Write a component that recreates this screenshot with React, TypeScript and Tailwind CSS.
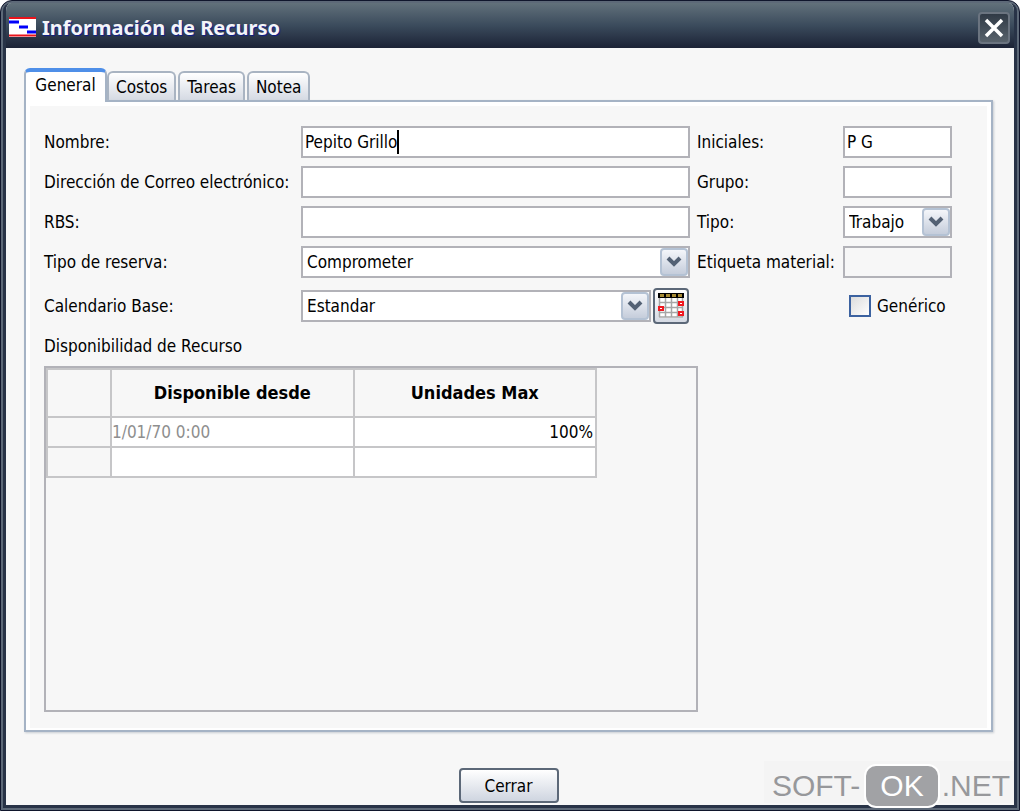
import {ReactNode, useState} from "react";

const inputClass = 'block h-8 w-full min-w-0 border-2 border-[#b2b2b8] bg-white px-0.5 text-black outline-none disabled:bg-[#f7f7f7]';

const tabs = ['General', 'Costos', 'Tareas', 'Notea'];

const rows = [
    { from: '1/01/70 0:00', units: '100%' },
    { from: '', units: '' },
];

const AppIcon = () => (
    <svg width="27" height="20" viewBox="0 0 27 20" className="-mt-0.5" aria-hidden="true">
        <rect width="27" height="20" fill="#fff" />
        <path d="M0 1h27M0 18.5h27" stroke="#e8141c" strokeWidth="2" />
        <path d="M0 5h10M10 10h9M18 15h9" stroke="#0000fa" strokeWidth="3" />
    </svg>
);

const CalendarIcon = () => (
    <svg width="28" height="26" viewBox="0 0 28 26" className="shrink-0" aria-hidden="true">
        <rect x="2" y="5" width="24" height="20" fill="#fff" />
        <path d="M2.5 5v19M8.500 5v19M14.500 5v19M20.500 5v19M25.500 5v19M2 9.500h24M2 14.500h24M2 19.500h24M2 24h24" stroke="#a6a6a6" strokeWidth="1.5" />
        <rect x="1" y="0" width="26" height="5" fill="#000" />
        <path d="M3 2.500h4M9 2.500h4M15 2.500h4M21 2.500h4" stroke="#a58a35" strokeWidth="3" />
        <path d="M22 9h4v3h-4zM2 14h4v3H2zM22 19h4v3h-4z" fill="#fff" stroke="#f01820" strokeWidth="2" />
    </svg>
);

const Dropdown = ({ id, options }: { id: string, options: string[] }) => (
    <div className="relative min-w-0 flex-1">
        <select id={id} className="block h-8 w-full appearance-none border-2 border-[#b2b2b8] bg-white pl-1 pr-8 text-black outline-none">
            {options.map((option) => <option key={option}>{option}</option>)}
        </select>
        <span className="pointer-events-none absolute inset-y-0.5 right-0.5 flex w-7 items-center justify-center rounded-sm border-2 border-[#b4c2d4] bg-gradient-to-b from-[#f4f6fa] to-[#c5cddb]">
            <svg width="16" height="12" viewBox="0 0 16 12" aria-hidden="true">
                <path d="M2 2l6 6 6-6" fill="none" stroke="#536174" strokeWidth="4" />
            </svg>
        </span>
    </div>
);

const Label = ({ htmlFor, children }: { htmlFor: string, children: ReactNode }) => (
    <label htmlFor={htmlFor} className="whitespace-nowrap">{children}</label>
);

const TitleBar = () => (
    <header className="flex h-[45px] shrink-0 items-center gap-1.5 bg-gradient-to-b from-[#62717b] via-[#3b4b5c] to-[#1c2336] pl-[3px] pr-1 pt-1">
        <AppIcon />
        <h1 className="flex-1 font-['Noto_Sans',sans-serif] text-[20px] font-bold text-[#f4f5f8] [text-shadow:1px_1px_1px_#0c1a8c]">
            Información de Recurso
        </h1>
        <button aria-label="Cerrar ventana" className="flex h-8 w-8 items-center justify-center rounded-sm border-2 border-[#6b7480] bg-gradient-to-b from-[#303a46] to-[#59636c]">
            <svg width="20" height="20" viewBox="0 0 20 20" className="shrink-0" aria-hidden="true">
                <path d="M2 2l16 16M18 2L2 18" stroke="#fff" strokeWidth="3.5" />
            </svg>
        </button>
    </header>
);

const Availability = () => (
    <section className="mr-[254px] flex flex-1 flex-col">
        <h2 className="mt-2 leading-6">Disponibilidad de Recurso</h2>
        <div className="mt-2 flex-1 border-2 border-[#b2b2b8]">
            <table className="w-[551px] table-fixed border-collapse">
                <colgroup>
                    <col className="w-16" />
                    <col />
                    <col />
                </colgroup>
                <thead>
                    <tr className="h-12 text-[18px]">
                        <th className="border-2 border-[#c6c6c8]"></th>
                        <th className="border-2 border-[#c6c6c8] font-bold">Disponible desde</th>
                        <th className="border-2 border-[#c6c6c8] font-bold">Unidades Max</th>
                    </tr>
                </thead>
                <tbody>
                    {rows.map((row, i) => (
                        <tr key={i} className="h-[30px]">
                            <td className="border-2 border-[#c6c6c8]"></td>
                            <td className="border-2 border-[#c6c6c8] bg-white text-[#8e8e8e]">{row.from}</td>
                            <td className="border-2 border-[#c6c6c8] bg-white px-0.5 text-right">{row.units}</td>
                        </tr>
                    ))}
                </tbody>
            </table>
        </div>
    </section>
);

const Watermark = () => (
    <div className="pointer-events-none absolute bottom-2 right-1.5 flex h-[42px] items-center bg-[#f2f2f2]/80 pl-2 pr-1 pt-2 font-['Liberation_Sans',sans-serif] text-[30px] text-[#97989b]">
        <span>SOFT-</span>
        <span className="ml-1 mr-0.5 rounded-xl border-2 border-white bg-[#a1a2a5] px-3.5 leading-10 text-white">OK</span>
        <span>.NET</span>
    </div>
);

export default function App() {
    const [active, setActive] = useState('General');
    const [name, setName] = useState('Pepito Grillo');

    return (
        <div className="relative min-h-screen bg-white font-['DejaVu_Sans_Condensed','Open_Sans',sans-serif] text-[17px] leading-6 text-black">
            <div className="flex min-h-screen flex-col rounded-t-xl border border-[#10162c] bg-[#5d6978] p-0.5">
                <div className="flex flex-1 flex-col overflow-hidden rounded-t-lg border-x-[3px] border-b-[3px] border-[#283347] bg-[#f7f7f7]">
                    <TitleBar />
                    <main className="flex flex-1 flex-col pb-0.5 pl-[18px] pr-[21px] pt-5">
                        <div role="tablist" className="flex items-end">
                            {tabs.map((tab) => (
                                <button
                                    key={tab}
                                    role="tab"
                                    aria-selected={tab === active}
                                    onClick={() => setActive(tab)}
                                    className={tab === active
                                        ? 'z-10 -mb-0.5 h-[34px] w-[83px] rounded-t-md border-x-2 border-t-4 border-x-[#a5b3c5] border-t-[#4f8fe8] bg-white pb-1'
                                        : 'mr-0.5 h-[29px] rounded-t-md border-x-2 border-t-2 border-[#a9b4c2] bg-gradient-to-b from-white to-[#d5dae3] px-[7px]'}
                                >
                                    {tab}
                                </button>
                            ))}
                        </div>
                        <div role="tabpanel" className="flex flex-1 flex-col border-2 border-[#a5b3c5] shadow-[1px_1px_2px_#c8ccd2]">
                            <div className="flex flex-1 flex-col border-4 border-b-2 border-white pb-4 pl-3.5 pr-[35px] pt-5">
                                <div className="grid grid-cols-[257px_1fr_146px_109px] items-center gap-y-2">
                                    <Label htmlFor="nombre">Nombre:</Label>
                                    <div className="relative mr-[7px]">
                                        <input id="nombre" className={inputClass} value={name} onChange={(e) => setName(e.target.value)} />
                                        <span aria-hidden="true" className="pointer-events-none absolute left-1 top-1 h-6 border-r-2 border-black">
                                            <span className="invisible whitespace-pre">{name}</span>
                                        </span>
                                    </div>
                                    <Label htmlFor="iniciales">Iniciales:</Label>
                                    <input id="iniciales" className={inputClass} defaultValue="P G" />

                                    <Label htmlFor="correo">Dirección de Correo electrónico:</Label>
                                    <div className="mr-[7px]"><input id="correo" className={inputClass} /></div>
                                    <Label htmlFor="grupo">Grupo:</Label>
                                    <input id="grupo" className={inputClass} />

                                    <Label htmlFor="rbs">RBS:</Label>
                                    <div className="mr-[7px]"><input id="rbs" className={inputClass} /></div>
                                    <Label htmlFor="tipo">Tipo:</Label>
                                    <Dropdown id="tipo" options={['Trabajo', 'Material']} />

                                    <Label htmlFor="reserva">Tipo de reserva:</Label>
                                    <div className="mr-[7px] flex"><Dropdown id="reserva" options={['Comprometer', 'Proponer']} /></div>
                                    <Label htmlFor="etiqueta">Etiqueta material:</Label>
                                    <input id="etiqueta" className={inputClass} disabled />

                                    <Label htmlFor="calendario">Calendario Base:</Label>
                                    <div className="mr-2 flex items-center gap-0.5 py-0.5">
                                        <Dropdown id="calendario" options={['Estandar', 'Turno de noche']} />
                                        <button aria-label="Calendario" className="flex h-9 w-9 items-center justify-center rounded-sm border-2 border-[#5c6878] bg-gradient-to-b from-white to-[#d5dae3]">
                                            <CalendarIcon />
                                        </button>
                                    </div>
                                    <label className="col-start-4 flex items-center gap-1.5 pl-1.5">
                                        <input type="checkbox" className="h-[22px] w-[22px] shrink-0 appearance-none border-2 border-[#3c62a0] bg-gradient-to-br from-[#dcdcdc] to-white checked:bg-[#3c62a0]" />
                                        Genérico
                                    </label>
                                </div>
                                <Availability />
                            </div>
                        </div>
                        <footer className="flex justify-center pt-9">
                            <button className="h-[35px] w-[100px] rounded-sm border-2 border-[#5c6878] bg-gradient-to-b from-white to-[#cfd5e0]">Cerrar</button>
                        </footer>
                    </main>
                </div>
            </div>
            <Watermark />
        </div>
    );
}
